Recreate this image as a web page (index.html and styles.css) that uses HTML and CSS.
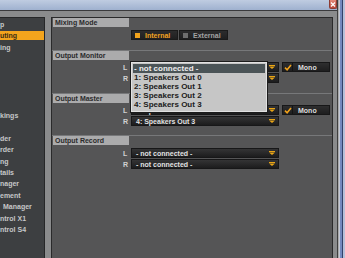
FILE: index.html
```html
<!DOCTYPE html>
<html>
<head>
<meta charset="utf-8">
<title>Preferences</title>
<link rel="stylesheet" href="styles.css">
</head>
<body>
<div class="screen">
  <div class="app">
    <div class="titlebar">
      <div class="close">
        <svg width="6" height="5" viewBox="0 0 6 5"><path d="M1 0.5L5 4.5M5 0.5L1 4.5" stroke="#fff" stroke-width="1.2"/></svg>
      </div>
    </div>
    <div class="workspace">
      <nav class="sidebar">
        <div class="nav-item">p</div>
        <div class="nav-item active">uting</div>
        <div class="nav-item">ing</div>
        <div class="nav-item"></div>
        <div class="nav-item"></div>
        <div class="nav-item"></div>
        <div class="nav-item"></div>
        <div class="nav-item"></div>
        <div class="nav-item">kings</div>
        <div class="nav-item"></div>
        <div class="nav-item">der</div>
        <div class="nav-item">rder</div>
        <div class="nav-item">ng</div>
        <div class="nav-item">tails</div>
        <div class="nav-item">nager</div>
        <div class="nav-item">ement</div>
        <div class="nav-item indent">Manager</div>
        <div class="nav-item">ntrol X1</div>
        <div class="nav-item">ntrol S4</div>
      </nav>
      <main class="panel">
        <section class="group group-mixing">
          <div class="group-title">Mixing Mode</div>
          <div class="segmented">
            <div class="seg seg-on"><span class="led"></span>Internal</div>
            <div class="seg seg-off"><span class="led"></span>External</div>
          </div>
        </section>

        <section class="group group-monitor">
          <div class="group-title">Output Monitor</div>
          <div class="rows">
            <div class="row">
              <span class="ch">L</span>
              <div class="select">
                <span class="value">- not connected -</span>
                <svg class="arrow" width="6" height="4" viewBox="0 0 6 4"><rect width="6" height="1" fill="#e9a516"/><path d="M0 1.6H6L3 4Z" fill="#e9a516"/></svg>
                <div class="popup">
                  <div class="popup-item selected">- not connected -</div>
                  <div class="popup-item">1: Speakers Out 0</div>
                  <div class="popup-item">2: Speakers Out 1</div>
                  <div class="popup-item">3: Speakers Out 2</div>
                  <div class="popup-item">4: Speakers Out 3</div>
                </div>
              </div>
              <div class="check">
                <span class="check-box"><svg width="8" height="7" viewBox="0 0 8 7"><path d="M1 3.6L3.1 5.7L7 1" stroke="#f0a21c" stroke-width="1.6" fill="none"/></svg></span>
                <span class="check-label">Mono</span>
              </div>
            </div>
            <div class="row">
              <span class="ch">R</span>
              <div class="select">
                <span class="value">- not connected -</span>
                <svg class="arrow" width="6" height="4" viewBox="0 0 6 4"><rect width="6" height="1" fill="#e9a516"/><path d="M0 1.6H6L3 4Z" fill="#e9a516"/></svg>
              </div>
            </div>
          </div>
        </section>

        <section class="group group-master">
          <div class="group-title">Output Master</div>
          <div class="rows">
            <div class="row">
              <span class="ch">L</span>
              <div class="select">
                <span class="value">3: Speakers Out 2</span>
                <svg class="arrow" width="6" height="4" viewBox="0 0 6 4"><rect width="6" height="1" fill="#e9a516"/><path d="M0 1.6H6L3 4Z" fill="#e9a516"/></svg>
              </div>
              <div class="check">
                <span class="check-box"><svg width="8" height="7" viewBox="0 0 8 7"><path d="M1 3.6L3.1 5.7L7 1" stroke="#f0a21c" stroke-width="1.6" fill="none"/></svg></span>
                <span class="check-label">Mono</span>
              </div>
            </div>
            <div class="row">
              <span class="ch">R</span>
              <div class="select">
                <span class="value">4: Speakers Out 3</span>
                <svg class="arrow" width="6" height="4" viewBox="0 0 6 4"><rect width="6" height="1" fill="#e9a516"/><path d="M0 1.6H6L3 4Z" fill="#e9a516"/></svg>
              </div>
            </div>
          </div>
        </section>

        <section class="group group-record">
          <div class="group-title">Output Record</div>
          <div class="rows">
            <div class="row">
              <span class="ch">L</span>
              <div class="select">
                <span class="value">- not connected -</span>
                <svg class="arrow" width="6" height="4" viewBox="0 0 6 4"><rect width="6" height="1" fill="#e9a516"/><path d="M0 1.6H6L3 4Z" fill="#e9a516"/></svg>
              </div>
            </div>
            <div class="row">
              <span class="ch">R</span>
              <div class="select">
                <span class="value">- not connected -</span>
                <svg class="arrow" width="6" height="4" viewBox="0 0 6 4"><rect width="6" height="1" fill="#e9a516"/><path d="M0 1.6H6L3 4Z" fill="#e9a516"/></svg>
              </div>
            </div>
          </div>
        </section>
      </main>
    </div>
  </div>
  <div class="frame-edge"></div>
</div>
</body>
</html>
```

FILE: styles.css
```css
* { box-sizing: border-box; }
html, body { margin: 0; padding: 0; }
body {
  width: 345px;
  height: 258px;
  overflow: hidden;
  background: #8a8b8c;
  font-family: "Liberation Sans", Arial, sans-serif;
}
.screen { display: flex; width: 345px; height: 258px; }
.app { width: 337px; display: flex; flex-direction: column; }
.frame-edge {
  width: 8px;
  background: linear-gradient(to right,
    #3e3e3e 0 1px, #a9a9a9 1px 2px, #c4cad8 2px 3px,
    #7389bf 3px 5px, #33426a 5px 6px, #b6c0d9 6px 8px);
}

.titlebar {
  height: 11px;
  flex: none;
  background: linear-gradient(#bfcce1, #9fb1cf);
  border-bottom: 1px solid #3a3a3c;
  display: flex;
  justify-content: flex-end;
}
.close {
  width: 8px;
  height: 9px;
  background: linear-gradient(#e48a7a, #b9493b);
  border: 1px solid #8d3c33;
  border-top: none;
  border-radius: 0 0 2px 2px;
  display: flex;
  align-items: center;
  justify-content: center;
}

.workspace {
  flex: 1;
  display: flex;
  gap: 6px;
  padding: 6px 4px 0 0;
}

.sidebar {
  width: 45px;
  flex: none;
  background: #3d3f41;
  border-top: 1px solid #262728;
  border-right: 1px solid #262728;
  padding-top: 2px;
  overflow: hidden;
}
.nav-item {
  height: 9px;
  line-height: 9px;
  margin-bottom: 2.4px;
  font-size: 7px;
  font-weight: bold;
  color: #c6c7c8;
  white-space: nowrap;
  overflow: hidden;
}
.nav-item.indent { padding-left: 3px; }
.nav-item.active { background: #f3a41d; color: #3b2d14; }

.panel {
  flex: 1;
  background: #555556;
  border: 1px solid #2a2a2b;
  border-bottom: none;
  display: flex;
  flex-direction: column;
}
.group { border-top: 1px solid #77787a; }
.group-mixing { border-top: none; padding-bottom: 10px; }
.group-monitor { padding-bottom: 10px; }
.group-master { padding-bottom: 9px; }
.group-title {
  width: 76px;
  height: 9px;
  margin-left: 1px;
  padding-left: 2px;
  background: #ababac;
  color: #2a2a2b;
  font-size: 7px;
  font-weight: bold;
  line-height: 9px;
  white-space: nowrap;
}

.segmented {
  display: flex;
  gap: 1px;
  margin: 3px 0 0 79px;
  height: 10px;
}
.seg {
  display: flex;
  align-items: center;
  padding-left: 3px;
  background: linear-gradient(#2c2c2d, #1f1f20);
  border: 1px solid #1a1a1a;
  font-size: 7px;
  font-weight: bold;
}
.seg-on { width: 47px; color: #f1a322; }
.seg-off { width: 49px; color: #a3a3a3; }
.led { width: 5px; height: 5px; margin-right: 5px; }
.seg-on .led { background: #f2a31b; }
.seg-off .led { background: #6e6e6e; }

.rows {
  margin-top: 2px;
  display: flex;
  flex-direction: column;
  gap: 1px;
}
.group-record .rows { margin-top: 3px; }
.row {
  display: flex;
  align-items: center;
  height: 10px;
  padding-left: 71px;
}
.ch {
  width: 8px;
  font-size: 7px;
  font-weight: bold;
  color: #d2d2d2;
}
.select {
  position: relative;
  width: 148px;
  height: 10px;
  display: flex;
  align-items: center;
  justify-content: space-between;
  padding: 0 3px 0 4px;
  background: linear-gradient(#343435, #1c1c1d);
  border: 1px solid #171718;
  font-size: 7px;
  font-weight: bold;
  color: #e2e2e2;
  white-space: nowrap;
}
.arrow { display: block; }

.popup {
  position: absolute;
  left: -1px;
  top: -1px;
  width: 136px;
  background: #c6c6c6;
  border: 1px solid #e2e2e2;
  box-shadow: 0 0 0 1px #1c1c1c;
  padding: 1px 1px 2px 1px;
  z-index: 2;
}
.popup-item {
  height: 9px;
  line-height: 9px;
  padding-left: 1px;
  font-size: 8px;
  font-weight: bold;
  color: #202020;
}
.popup-item.selected { background: #4b5457; color: #eeeeee; }

.check {
  margin-left: 3px;
  width: 48px;
  height: 10px;
  display: flex;
  align-items: center;
  background: linear-gradient(#2e2e2f, #1e1e1f);
  border: 1px solid #171718;
}
.check-box {
  width: 10px;
  height: 8px;
  display: flex;
  align-items: center;
  justify-content: center;
  border-right: 1px solid #141414;
}
.check-label {
  margin-left: 5px;
  font-size: 7px;
  font-weight: bold;
  color: #dedede;
}
```
